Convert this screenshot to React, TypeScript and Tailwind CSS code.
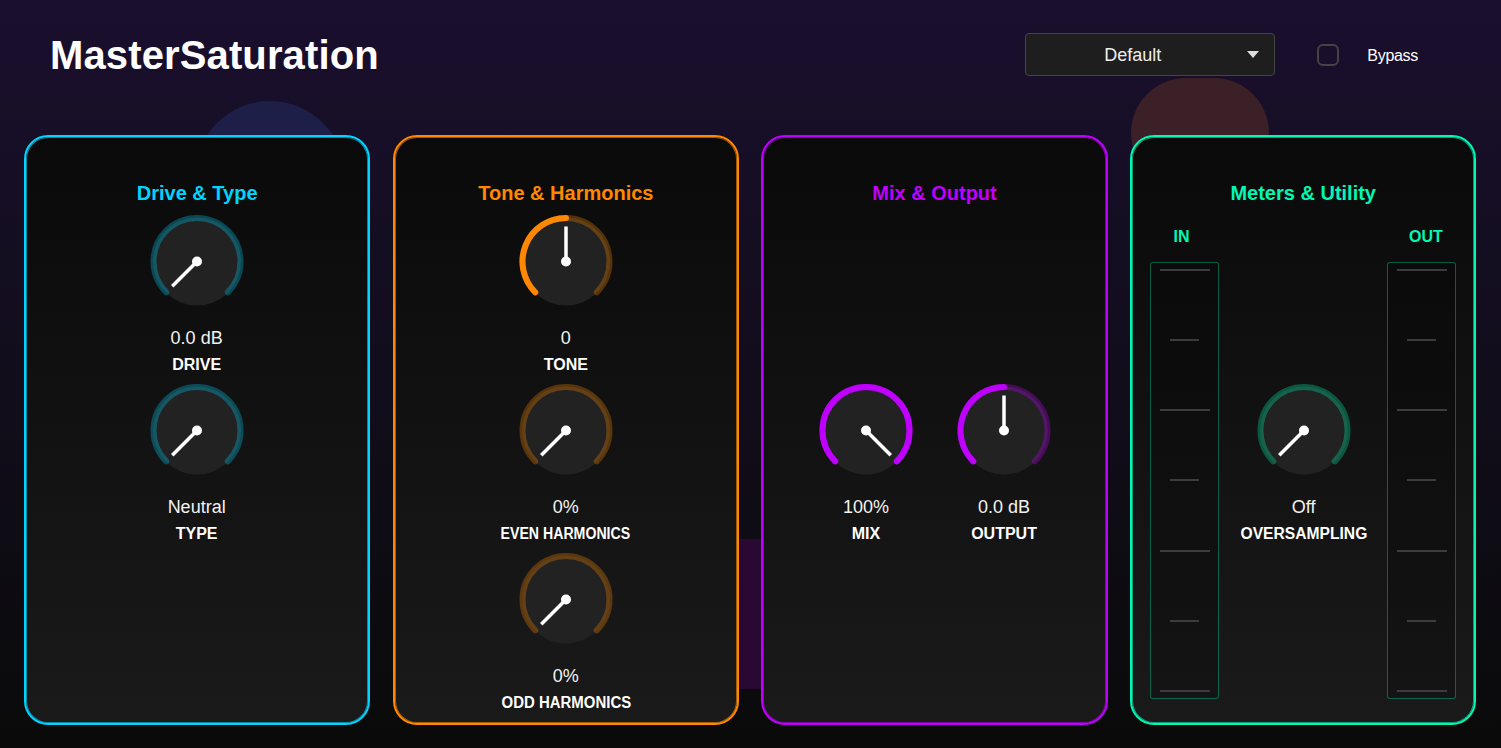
import React from 'react';

const CX = 50;
const CY = 50.5;
const R = 43.5;

const arcPoint = (deg: number) => {
  const rad = (deg * Math.PI) / 180;
  return [CX + R * Math.sin(rad), CY - R * Math.cos(rad)];
};

const arcPath = (from: number, to: number) => {
  const [x1, y1] = arcPoint(from);
  const [x2, y2] = arcPoint(to);
  return `M ${x1} ${y1} A ${R} ${R} 0 ${to - from > 180 ? 1 : 0} 1 ${x2} ${y2}`;
};

interface KnobProps {
  color: string;
  amount: number;
  value: string;
  label: string;
  labelClass?: string;
}

function Knob({ color, amount, value, label, labelClass = '' }: KnobProps) {
  const angle = -135 + amount * 270;
  const rad = (angle * Math.PI) / 180;
  return (
    <div className="flex h-[169px] w-[100px] flex-col items-center">
      <svg width="100" height="100" viewBox="0 0 100 100" className="shrink-0">
        <circle cx={CX} cy={CY} r="44" fill="#222222" />
        <path d={arcPath(-135, 135)} fill="none" stroke={color} strokeOpacity="0.3" strokeWidth="6" strokeLinecap="round" />
        {amount > 0 && (
          <path d={arcPath(-135, angle)} fill="none" stroke={color} strokeWidth="6" strokeLinecap="round" />
        )}
        <line
          x1={CX}
          y1={CY}
          x2={CX + 35 * Math.sin(rad)}
          y2={CY - 35 * Math.cos(rad)}
          stroke="#ffffff"
          strokeWidth="3.5"
        />
        <circle cx={CX} cy={CY} r="5" fill="#ffffff" />
      </svg>
      <div className="mt-[15px] h-6 whitespace-nowrap text-lg leading-6 text-[#f2f2f2]">{value}</div>
      <div className={`mt-[3px] h-6 whitespace-nowrap text-base font-bold leading-6 text-white ${labelClass}`}>{label}</div>
    </div>
  );
}

function Panel({ title, borderClass, textClass, children }: { title: string; borderClass: string; textClass: string; children: React.ReactNode }) {
  return (
    <section className={`relative flex min-h-0 flex-col rounded-[24px] border-2 bg-gradient-to-b from-[#0a0a0a] to-[#1a1a1a] px-[18px] pt-[44px] ${borderClass}`}>
      <h2 className={`mb-[6px] text-center text-xl font-bold leading-6 ${textClass}`}>{title}</h2>
      {children}
    </section>
  );
}

function Meter() {
  const ticks = [true, false, true, false, true, false, true];
  return (
    <div className="flex h-[437px] w-[69px] flex-col items-center justify-between rounded-[3px] border border-[#00f8b4]/35 bg-black/20 py-[6px]">
      {ticks.map((long, i) => (
        <div key={i} className={long ? 'h-[2px] w-[50px] bg-[#3c3c3c]' : 'h-[2px] w-[29px] bg-[#3c3c3c]'} />
      ))}
    </div>
  );
}

export default function App() {
  return (
    <div className="relative flex h-[748px] w-full flex-col overflow-hidden bg-gradient-to-b from-[#1a0f2e] to-[#0a0a0a] font-['Liberation_Sans',Arial,sans-serif] text-white">
      <div className="absolute left-[195px] top-[101px] h-[150px] w-[150px] rounded-full bg-[#1e1f48]" />
      <div className="absolute left-[1131px] top-[78px] h-[110px] w-[138px] rounded-full bg-[#3c2028]" />
      <div className="absolute left-[680px] top-[539px] h-[150px] w-[150px] bg-[#2a0834]" />

      <header className="relative flex h-[110px] shrink-0 items-center justify-between pl-[50px] pr-[83px]">
        <h1 className="text-[40px] font-bold leading-none tracking-[0.13px] text-white">MasterSaturation</h1>
        <div className="flex items-center">
          <div className="relative mb-px flex h-[43px] w-[250px] items-center justify-center rounded-[4px] border border-[#444444] bg-[#1e1e1e] pr-[35px] text-lg text-[#eeeeee]">
            Default
            <svg width="12" height="7" viewBox="0 0 12 7" className="absolute right-[15px] top-[17px]">
              <path d="M0 0 H12 L6 7 Z" fill="#dddddd" />
            </svg>
          </div>
          <div className="ml-[42px] h-[22px] w-[22px] rounded-[6px] border-2 border-[#444444]" />
          <span className="ml-[28px] mt-[2px] text-base tracking-[-0.3px] text-white">Bypass</span>
        </div>
      </header>

      <main className="relative ml-6 mt-[25px] mb-[23px] grid min-h-0 flex-1 grid-cols-[repeat(4,346.3px)] gap-[22.4px]">
        <Panel title="Drive & Type" borderClass="border-[#00d4ff] shadow-[inset_0_0_0_1px_rgba(0,212,255,0.6)]" textClass="text-[#00d4ff]">
          <div className="flex flex-col items-center pr-px">
            <Knob color="#00d4ff" amount={0} value="0.0 dB" label="DRIVE" />
            <Knob color="#00d4ff" amount={0} value="Neutral" label="TYPE" />
          </div>
        </Panel>

        <Panel title="Tone & Harmonics" borderClass="border-[#ff8800] shadow-[inset_0_0_0_1px_rgba(255,136,0,0.6)]" textClass="text-[#ff8800]">
          <div className="flex flex-col items-center">
            <Knob color="#ff8800" amount={0.5} value="0" label="TONE" />
            <Knob color="#ff8800" amount={0} value="0%" label="EVEN HARMONICS" labelClass="scale-x-[0.884]" />
            <Knob color="#ff8800" amount={0} value="0%" label="ODD HARMONICS" labelClass="scale-x-[0.935]" />
          </div>
        </Panel>

        <Panel title="Mix & Output" borderClass="border-[#bf00ff] shadow-[inset_0_0_0_1px_rgba(191,0,255,0.6)]" textClass="text-[#bf00ff]">
          <div className="flex flex-1 items-center justify-center gap-[38px] pb-[5px] pl-px">
            <Knob color="#bf00ff" amount={1} value="100%" label="MIX" />
            <Knob color="#bf00ff" amount={0.5} value="0.0 dB" label="OUTPUT" />
          </div>
        </Panel>

        <Panel title="Meters & Utility" borderClass="border-[#00f8b4] shadow-[inset_0_0_0_1px_rgba(0,248,180,0.6)]" textClass="text-[#00f8b4]">
          <div className="flex flex-1 justify-between">
            <div className="flex flex-col">
              <div className="mb-[13px] mt-[14px] pr-[6px] text-center text-base font-bold leading-6 text-[#00f8b4]">IN</div>
              <Meter />
            </div>
            <div className="flex flex-1 flex-col items-center justify-center pb-[5px] pl-px">
              <Knob color="#00f8b4" amount={0} value="Off" label="OVERSAMPLING" labelClass="scale-x-[0.977]" />
            </div>
            <div className="flex flex-col">
              <div className="mb-[13px] mt-[14px] pl-[8px] text-center text-base font-bold leading-6 text-[#00f8b4]">OUT</div>
              <Meter />
            </div>
          </div>
        </Panel>
      </main>
    </div>
  );
}
